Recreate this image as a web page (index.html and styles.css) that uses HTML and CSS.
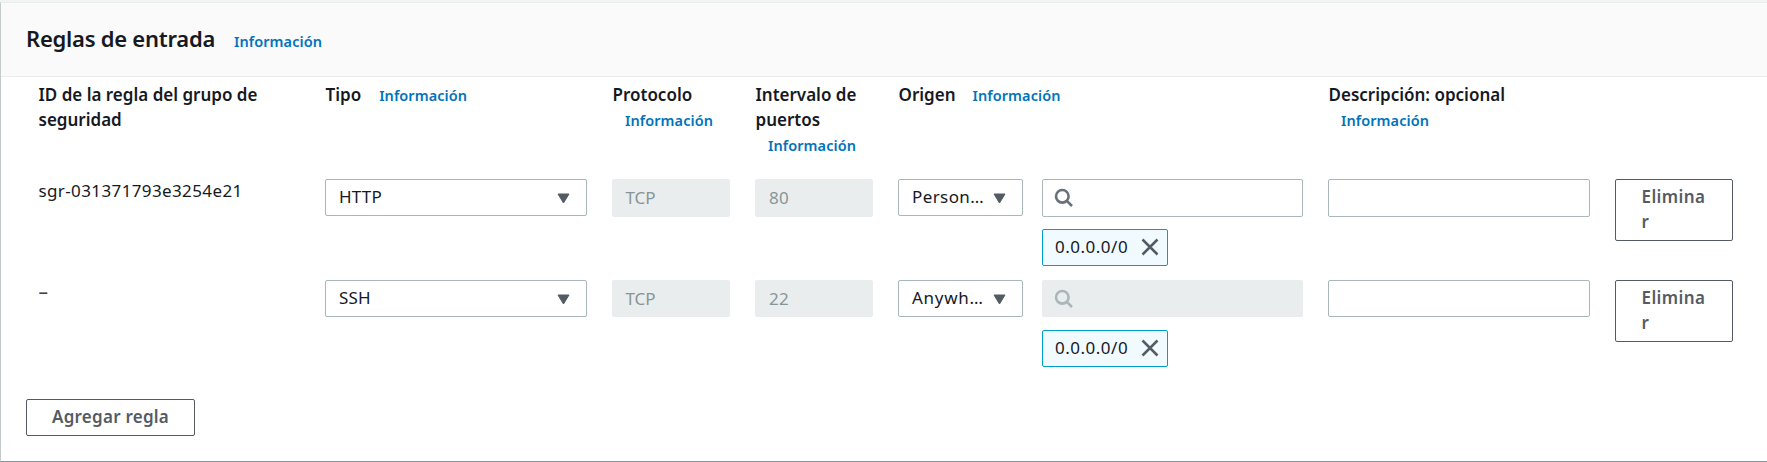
FILE: index.html
```html
<!DOCTYPE html>
<html lang="es">
<head>
<meta charset="utf-8">
<title>Reglas de entrada</title>
<link rel="stylesheet" href="styles.css">
</head>
<body>
<section class="panel">
  <header class="panel-header">
    <h2 class="title">Reglas de entrada</h2>
    <a class="info">Información</a>
  </header>
  <div class="rules">
    <div class="row head">
      <div class="cell"><span class="label">ID de la regla del grupo de<br>seguridad</span></div>
      <div class="cell"><span class="label">Tipo</span><a class="info">Información</a></div>
      <div class="cell"><span class="label">Protocolo</span><br><a class="info below">Información</a></div>
      <div class="cell"><span class="label">Intervalo de<br>puertos</span><br><a class="info below">Información</a></div>
      <div class="cell origin-head"><span class="label">Origen</span><a class="info">Información</a></div>
      <div class="cell"><span class="label">Descripción: opcional</span><br><a class="info below">Información</a></div>
    </div>
    <div class="row first">
      <div class="cell rule-id">sgr-031371793e3254e21</div>
      <div class="select"><span>HTTP</span><svg class="caret" viewBox="0 0 13 11"><path d="M1 1h11L6.500 10z"/></svg></div>
      <div class="input disabled">TCP</div>
      <div class="input disabled digits">80</div>
      <div class="origin">
        <div class="select small"><span>Person…</span><svg class="caret" viewBox="0 0 13 11"><path d="M1 1h11L6.500 10z"/></svg></div>
        <div class="source">
          <div class="input search"><svg class="lens" viewBox="0 0 20 20"><circle cx="8.300" cy="8.300" r="6.300"/><path d="M12.800 12.800l5.200 5.200"/></svg></div>
          <div class="token"><span>0.0.0.0/0</span><svg class="close" viewBox="0 0 18 18"><path d="M1.500 1.500l15 15M16.500 1.500l-15 15"/></svg></div>
        </div>
      </div>
      <div class="input"></div>
      <button class="button remove">Elimina<br>r</button>
    </div>
    <div class="row second">
      <div class="cell rule-id dash">–</div>
      <div class="select"><span>SSH</span><svg class="caret" viewBox="0 0 13 11"><path d="M1 1h11L6.500 10z"/></svg></div>
      <div class="input disabled">TCP</div>
      <div class="input disabled digits">22</div>
      <div class="origin">
        <div class="select small anywhere"><span>Anywh…</span><svg class="caret" viewBox="0 0 13 11"><path d="M1 1h11L6.500 10z"/></svg></div>
        <div class="source">
          <div class="input search disabled"><svg class="lens" viewBox="0 0 20 20"><circle cx="8.300" cy="8.300" r="6.300"/><path d="M12.800 12.800l5.200 5.200"/></svg></div>
          <div class="token"><span>0.0.0.0/0</span><svg class="close" viewBox="0 0 18 18"><path d="M1.500 1.500l15 15M16.500 1.500l-15 15"/></svg></div>
        </div>
      </div>
      <div class="input"></div>
      <button class="button remove">Elimina<br>r</button>
    </div>
  </div>
  <button class="button add">Agregar regla</button>
</section>
</body>
</html>
```
FILE: styles.css
```css
* { box-sizing: border-box; }
body {
  margin: 0;
  height: 462px;
  padding-top: 2px;
  background: #f2f3f3;
  color: #16191f;
  font: 17px/25px "Noto Sans", "Open Sans", sans-serif;
  overflow: hidden;
}
.panel {
  height: 460px;
  background: #fff;
  border-top: 1px solid #eaeded;
  border-left: 1px solid #c3cbcb;
  border-bottom: 1px solid #879596;
}
.panel-header {
  display: flex;
  align-items: baseline;
  height: 74px;
  padding: 19px 0 0 25px;
  background: #fafafa;
  border-bottom: 1px solid #eaeded;
}
.title {
  margin: 0;
  width: 208px;
  font-size: 22px;
  letter-spacing: -0.25px;
  line-height: 32px;
  font-weight: 600;
  white-space: nowrap;
}
.info {
  color: #0073bb;
  font-size: 14.5px;
  font-weight: 600;
  letter-spacing: 0.07px;
  margin-left: 18px;
}
.title + .info { margin-left: 0; }
.info.below { margin-left: 12.5px; }
.row {
  display: grid;
  grid-template-columns: 262px 262px 118px 118px 405px 262px 118px;
  column-gap: 25px;
  align-items: start;
  padding-left: 37px;
  white-space: nowrap;
}
.head { height: 102px; padding-top: 5px; }
.label { font-weight: 600; }
.head .cell { padding-left: 0.5px; }
.origin-head .info { margin-left: 17px; }
.first, .second { height: 101px; }
.rule-id { margin-top: -1px; padding-left: 0.5px; letter-spacing: 0.38px; }
.dash { margin-top: 0; font-size: 19px; color: #3c4249; }
.select, .input {
  height: 37px;
  border: 1px solid #aab7b8;
  border-radius: 2px;
  background: #fff;
}
.first .input { height: 38px; }
.select {
  display: flex;
  justify-content: space-between;
  padding: 4px 16.5px 0 13px;
  letter-spacing: 0.2px;
}
.small { padding-right: 16px; letter-spacing: 0.4px; }
.anywhere { letter-spacing: 0.7px; }
.caret { width: 13px; height: 11px; margin-top: 9px; fill: #545b64; stroke: #545b64; stroke-linejoin: round; }
.input { padding: 5px 12.5px 0; }
.digits { padding-left: 13px; letter-spacing: 0.4px; }
.input.disabled { background: #eaeded; border-color: #eaeded; color: #879596; }
.origin { display: grid; grid-template-columns: 125px 261px; column-gap: 19px; }
.source { height: 87px; display: flex; flex-direction: column; justify-content: space-between; align-items: flex-start; }
.input.search { width: 261px; padding: 8px 11px; }
.lens { display: block; width: 20px; height: 20px; fill: none; stroke: #687078; stroke-width: 2.600; }
.disabled .lens { stroke: #aab7b8; }
.token {
  display: flex;
  justify-content: space-between;
  width: 126px;
  height: 37px;
  padding: 4px 8px 0 12px;
  border: 1px solid #00a1c9;
  border-radius: 2px;
  background: #f1faff;
  letter-spacing: 0.5px;
}
.close { width: 18px; height: 18px; margin-top: 4px; fill: none; stroke: #545b64; stroke-width: 2.500; }
.button {
  border: 1px solid #545b64;
  border-radius: 2px;
  background: #fff;
  color: #545b64;
  font: 600 17px/25px "Noto Sans", "Open Sans", sans-serif;
  letter-spacing: 0.3px;
  text-align: left;
  white-space: nowrap;
}
.remove { height: 62px; padding: 4px 0 6px 25.500px; letter-spacing: 0.4px; }
.add { display: block; width: 169px; height: 37px; margin: 18px 0 0 25px; padding: 4px 0 6px 25px; letter-spacing: 0.25px; }
```
